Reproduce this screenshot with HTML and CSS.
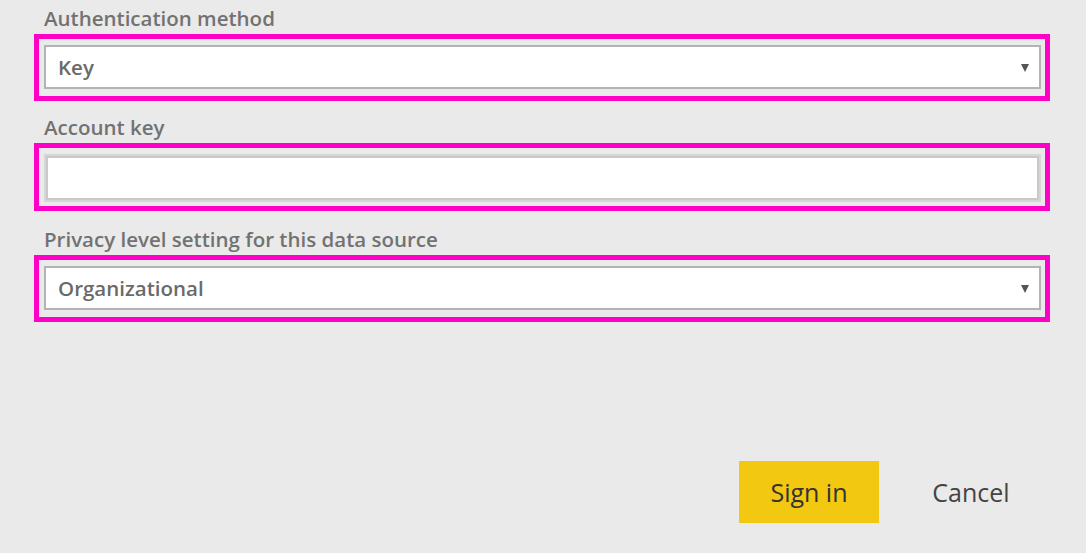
FILE: index.html
```html
<!DOCTYPE html>
<html>
<head>
<meta charset="utf-8">
<link rel="stylesheet" href="styles.css">
</head>
<body>
<div class="form">
  <div class="field first">
    <div class="label">Authentication method</div>
    <div class="highlight">
      <div class="select"><span class="value">Key</span><span class="arrow"></span></div>
    </div>
  </div>
  <div class="field second">
    <div class="label">Account key</div>
    <div class="highlight hl-input">
      <div class="input"></div>
    </div>
  </div>
  <div class="field third">
    <div class="label">Privacy level setting for this data source</div>
    <div class="highlight">
      <div class="select"><span class="value">Organizational</span><span class="arrow"></span></div>
    </div>
  </div>
  <div class="actions">
    <div class="btn primary">Sign in</div>
    <div class="btn">Cancel</div>
  </div>
</div>
</body>
</html>
```
FILE: styles.css
```css
html, body {
  margin: 0;
  padding: 0;
  background: #eaeaea;
  height: 100%;
}
body {
  font-family: "Open Sans", "Noto Sans", sans-serif;
}
.form {
  padding: 0 36px 0 34px;
  display: flex;
  flex-direction: column;
}
.label {
  height: 34px;
  line-height: 36px;
  padding-left: 10px;
  font-size: 20.5px;
  font-weight: 600;
  color: #727272;
  white-space: nowrap;
}
.field.second { margin-top: 8px; }
.field.third { margin-top: 10px; }
.highlight {
  border: 5px solid #ff00c8;
  padding: 6px 4px 7px 5px;
}
.hl-input {
  padding: 6px 4px 4px 5px;
}
.select {
  height: 40px;
  background: #fff;
  border: 2px solid #b3b3b3;
  display: flex;
  align-items: center;
  justify-content: space-between;
  padding: 0 10px 0 12px;
}
.value {
  font-size: 20.5px;
  font-weight: 600;
  color: #6a6a6a;
}
.arrow {
  width: 0;
  height: 0;
  border-left: 4.5px solid transparent;
  border-right: 4.5px solid transparent;
  border-top: 8px solid #555;
  margin-top: 2px;
}
.input {
  height: 44px;
  background: #fff;
  border: 2px solid #d6d6d6;
  box-shadow: inset 0 0 0 2px #c9c9c9;
}
.actions {
  display: flex;
  justify-content: flex-end;
  gap: 22px;
  margin-top: 139px;
  padding-right: 9px;
}
.btn {
  width: 140px;
  height: 62px;
  line-height: 62px;
  text-align: center;
  font-size: 25px;
  color: #444;
}
.btn.primary {
  background: #f2c811;
  color: #333;
}
```
